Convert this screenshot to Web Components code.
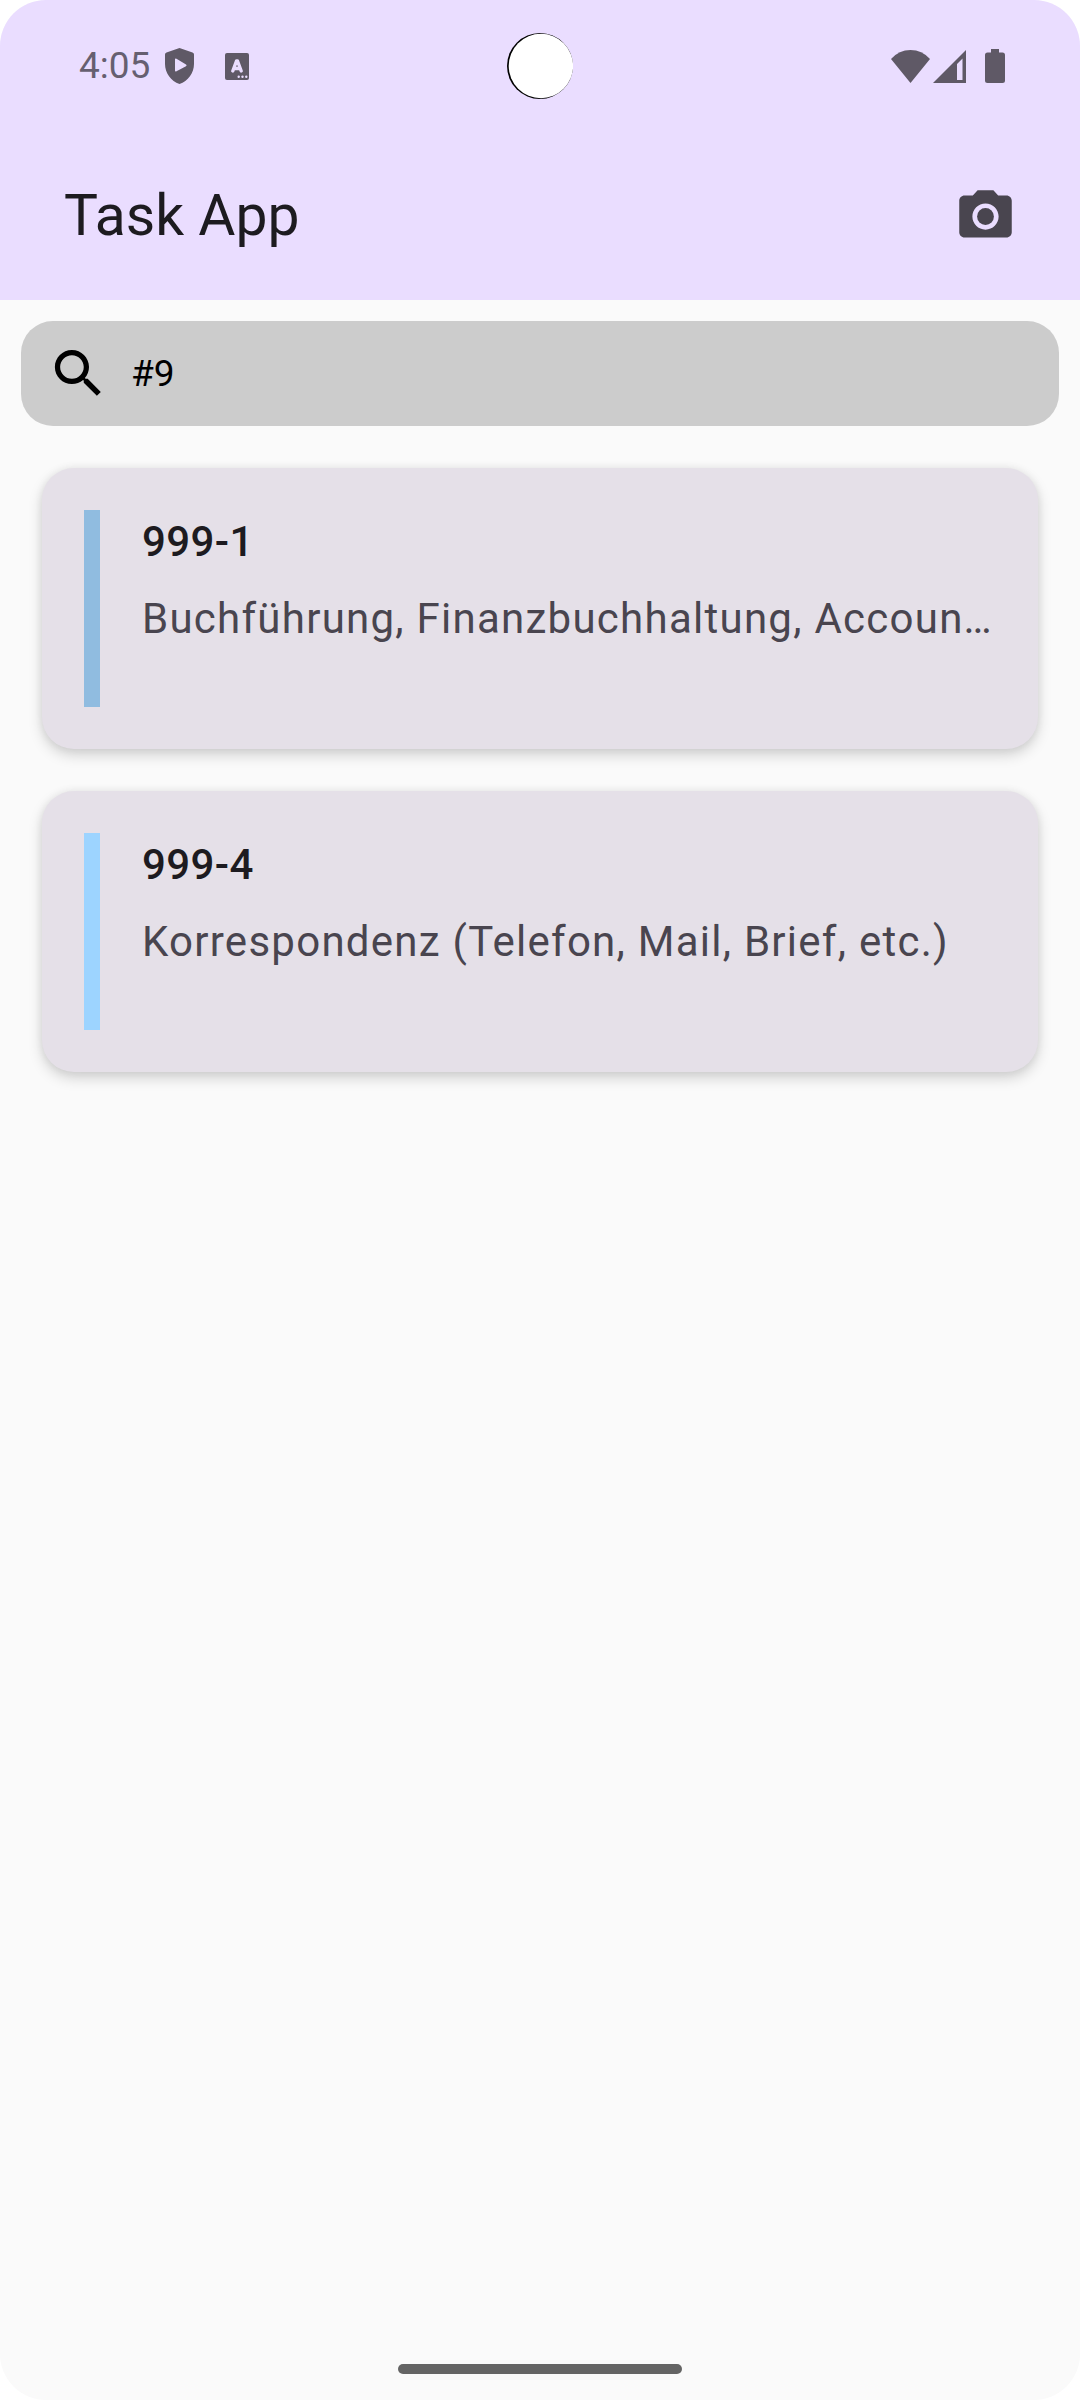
<!DOCTYPE html>
<html lang="de">
<head>
<meta charset="utf-8">
<meta name="viewport" content="width=device-width, initial-scale=1">
<title>Task App</title>
<style>
  html { background: #ffffff; }
  body { margin: 0; font-family: Roboto, "Noto Sans", sans-serif; color: #1d1b20; }
</style>
</head>
<body>
<task-screen>
  <status-bar slot="header" time="4:05"></status-bar>
  <app-bar slot="header">Task App</app-bar>
  <search-field value="#9"></search-field>
  <task-list>
    <task-card color="#90bce0"><span slot="number">999-1</span>Buchführung, Finanzbuchhaltung, Accoun…</task-card>
    <task-card color="#9dd4ff"><span slot="number">999-4</span>Korrespondenz (Telefon, Mail, Brief, etc.)</task-card>
  </task-list>
</task-screen>

<script>
  class BaseElement extends HTMLElement {
    constructor() {
      super();
      this.attachShadow({ mode: "open" });
    }
    connectedCallback() {
      this.shadowRoot.innerHTML = this.render();
    }
  }

  customElements.define("task-screen", class extends BaseElement {
    render() {
      return `
        <style>
          :host { display: flex; flex-direction: column; min-height: 100vh; background: #fafafa; border-radius: 46px; overflow: hidden; }
          header { background: #eaddff; }
          main { flex: 1; padding: 21px; }
          footer { display: flex; justify-content: center; padding-bottom: 26px; }
          .handle { width: 284px; height: 10px; border-radius: 5px; background: #646464; }
        </style>
        <header><slot name="header"></slot></header>
        <main><slot></slot></main>
        <footer><div class="handle"></div></footer>`;
    }
  });

  customElements.define("status-bar", class extends BaseElement {
    render() {
      return `
        <style>
          :host { display: grid; grid-template-columns: 1fr auto 1fr; align-items: center; height: 132px; padding: 0 75px 0 79px; box-sizing: border-box; color: #665f70; }
          .side { display: flex; align-items: center; }
          .left { gap: 15px; }
          .right { justify-content: flex-end; }
          .time { font-size: 37px; line-height: 44px; }
          svg { display: block; fill: #5f5966; }
          .notes { display: flex; align-items: center; gap: 31px; }
          .status { display: flex; align-items: center; }
          .status svg + svg { margin-left: 3px; }
          .status svg:last-child { margin-left: 19px; }
          .lens { margin-left: -4px; }
        </style>
        <div class="side left">
          <span class="time">${this.getAttribute("time")}</span>
          <div class="notes">
            <svg width="29" height="36" viewBox="0 0 29 36" aria-hidden="true">
              <path fill-rule="evenodd" d="M14.500 0 27.500 4.500Q29 5 29 6.500V16C29 25 23 33 14.500 36 6 33 0 25 0 16V6.500Q0 5 1.500 4.500ZM10 11.500V22.500Q10 24 11.500 23.300L21 18.200Q22.300 17.300 21 16.500L11.500 10.800Q10 10 10 11.500Z"/>
            </svg>
            <svg width="24" height="27" viewBox="0 0 24 27" aria-hidden="true">
              <rect width="24" height="27" rx="2"/>
              <path d="M7.800 18 11.500 8H12.500L16.200 18M9.500 15.500H14.500" fill="none" stroke="#eaddff" stroke-width="3.400" stroke-linecap="round" stroke-linejoin="round"/>
              <g fill="#eaddff"><circle cx="13.700" cy="23.800" r="1.200"/><circle cx="17.500" cy="23.800" r="1.200"/><circle cx="21.300" cy="23.800" r="1.200"/></g>
            </svg>
          </div>
        </div>
        <svg class="lens" width="66" height="66" viewBox="0 0 66 66" aria-hidden="true">
          <circle cx="33" cy="33" r="33" fill="#000"/>
          <circle cx="33.900" cy="33" r="32.200" fill="#fff"/>
        </svg>
        <div class="side right">
          <div class="status">
            <svg width="39" height="33" viewBox="0 0 39 33" aria-hidden="true"><path d="M0 9Q8 0 19.500 0T39 9L19.500 33Z"/></svg>
            <svg width="33" height="33" viewBox="0 0 33 33" aria-hidden="true"><path fill-rule="evenodd" d="M33 0V33H0ZM24 14V30H29.500V8.500Z"/></svg>
            <svg width="20" height="34" viewBox="0 0 20 34" aria-hidden="true"><path d="M6 0H14V3.500H17.500Q20 3.500 20 6V31.500Q20 34 17.500 34H2.500Q0 34 0 31.500V6Q0 3.500 2.500 3.500H6Z"/></svg>
          </div>
        </div>`;
    }
  });

  customElements.define("app-bar", class extends BaseElement {
    render() {
      return `
        <style>
          :host { display: flex; align-items: center; justify-content: space-between; height: 168px; padding: 0 63px 0 64px; box-sizing: border-box; }
          h1 { margin: 0; font-size: 57px; line-height: 74px; font-weight: 400; }
          button { display: block; padding: 0; border: 0; background: none; color: #49454f; }
          svg { display: block; fill: currentColor; }
        </style>
        <h1><slot></slot></h1>
        <button type="button" aria-label="Kamera">
          <svg width="63" height="63" viewBox="0 0 24 24" aria-hidden="true">
            <circle cx="12" cy="12" r="3.200"/>
            <path d="M9 2 7.170 4H4c-1.100 0-2 .9-2 2v12c0 1.100.9 2 2 2h16c1.100 0 2-.9 2-2V6c0-1.100-.9-2-2-2h-3.170L15 2H9zm3 15c-2.760 0-5-2.240-5-5s2.240-5 5-5 5 2.240 5 5-2.240 5-5 5z"/>
          </svg>
        </button>`;
    }
  });

  customElements.define("search-field", class extends BaseElement {
    render() {
      return `
        <style>
          :host { display: block; }
          label { display: flex; align-items: center; gap: 21px; height: 105px; padding: 0 26px; box-sizing: border-box; border-radius: 32px; background: #cccccc; }
          svg { display: block; flex: none; fill: #000; }
          input { flex: 1; min-width: 0; padding: 0; border: 0; outline: 0; background: none; color: #000; font: 400 37px/44px Roboto, "Noto Sans", sans-serif; }
        </style>
        <label>
          <svg width="63" height="63" viewBox="0 0 24 24" aria-hidden="true">
            <path d="M15.500 14h-.79l-.28-.27C15.410 12.590 16 11.110 16 9.500 16 5.910 13.090 3 9.500 3S3 5.910 3 9.500 5.910 16 9.500 16c1.610 0 3.090-.59 4.230-1.570l.27.28v.79l5 4.990L20.490 19l-4.990-5zm-6 0C7.010 14 5 11.990 5 9.500S7.010 5 9.500 5 14 7.010 14 9.500 11.990 14 9.500 14z"/>
          </svg>
          <input type="text" aria-label="Suche" value="${this.getAttribute("value")}">
        </label>`;
    }
  });

  customElements.define("task-list", class extends BaseElement {
    render() {
      return `
        <style>
          :host { display: flex; flex-direction: column; gap: 42px; padding: 42px 21px; }
        </style>
        <slot></slot>`;
    }
  });

  customElements.define("task-card", class extends BaseElement {
    render() {
      return `
        <style>
          :host { display: block; border-radius: 32px; background: #e5e0e8; box-shadow: 0 6px 14px rgba(0, 0, 0, .17), 0 0 8px rgba(0, 0, 0, .06); }
          article { display: flex; gap: 42px; padding: 42px; }
          .stripe { flex: none; width: 16px; min-height: 197px; background: ${this.getAttribute("color")}; }
          .text { flex: 1; min-width: 0; display: flex; flex-direction: column; gap: 14px; font-size: 42px; line-height: 63px; }
          h2, p { margin: 0; font-size: inherit; white-space: nowrap; overflow: hidden; text-overflow: ellipsis; }
          h2 { font-weight: 500; letter-spacing: .01em; }
          p { color: #49454f; letter-spacing: .03em; }
        </style>
        <article>
          <div class="stripe"></div>
          <div class="text">
            <h2><slot name="number"></slot></h2>
            <p><slot></slot></p>
          </div>
        </article>`;
    }
  });
</script>
</body>
</html>
